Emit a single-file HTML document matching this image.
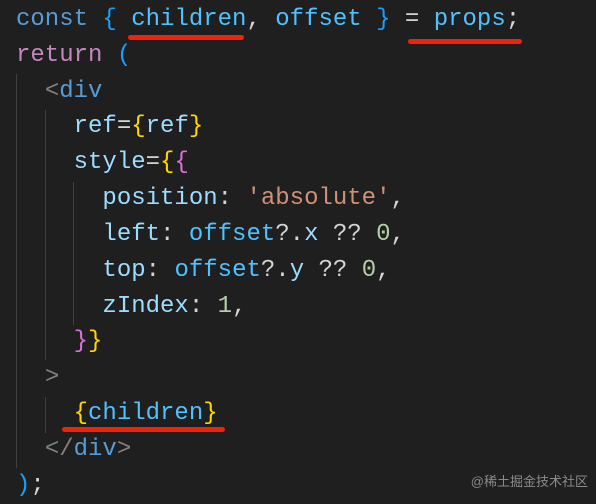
<!DOCTYPE html>
<html><head><meta charset="utf-8"><style>
body{margin:0;width:596px;height:494px;background:#1f1f1f;overflow:hidden;position:relative;font-family:"Liberation Mono",monospace;font-size:24px}
.l{position:absolute;left:16px;height:36px;line-height:36px;white-space:pre;color:#d4d4d4}
.k{color:#569cd6}.v{color:#4fc1ff}.p{color:#9cdcfe}.r{color:#c586c0}.b{color:#179fff}.y{color:#ffd700}.m{color:#da70d6}.s{color:#ce9178}.n{color:#b5cea8}.g{color:#808080}
.gd{position:absolute;width:1px;background:#404040}
.u{position:absolute;height:5px;background:#f0220a;border-radius:3px}
.w{position:absolute;right:8px;bottom:4px;font-family:"Liberation Sans","Noto Sans CJK SC",sans-serif;font-size:13px;color:#8a8a8a}
</style></head><body>
<div class="gd" style="left:16px;top:74px;height:394px"></div>
<div class="gd" style="left:45px;top:110px;height:250px"></div>
<div class="gd" style="left:73px;top:182px;height:143px"></div>
<div class="gd" style="left:45px;top:397px;height:36px"></div>
<div class="l" style="top:2px"><span class="k">const</span> <span class="b">{</span> <span class="v">children</span>, <span class="v">offset</span> <span class="b">}</span> = <span class="v">props</span>;</div>
<div class="l" style="top:38px"><span class="r">return</span> <span class="b">(</span></div>
<div class="l" style="top:74px">  <span class="g">&lt;</span><span class="k">div</span></div>
<div class="l" style="top:109px">    <span class="p">ref</span>=<span class="y">{</span><span class="p">ref</span><span class="y">}</span></div>
<div class="l" style="top:145px">    <span class="p">style</span>=<span class="y">{</span><span class="m">{</span></div>
<div class="l" style="top:181px">      <span class="p">position</span>: <span class="s">'absolute'</span>,</div>
<div class="l" style="top:217px">      <span class="p">left</span>: <span class="v">offset</span>?.<span class="p">x</span> ?? <span class="n">0</span>,</div>
<div class="l" style="top:253px">      <span class="p">top</span>: <span class="v">offset</span>?.<span class="p">y</span> ?? <span class="n">0</span>,</div>
<div class="l" style="top:289px">      <span class="p">zIndex</span>: <span class="n">1</span>,</div>
<div class="l" style="top:324px">    <span class="m">}</span><span class="y">}</span></div>
<div class="l" style="top:360px">  <span class="g">&gt;</span></div>
<div class="l" style="top:396px">    <span class="y">{</span><span class="v">children</span><span class="y">}</span></div>
<div class="l" style="top:432px">  <span class="g">&lt;/</span><span class="k">div</span><span class="g">&gt;</span></div>
<div class="l" style="top:468px"><span class="b">)</span>;</div>
<div class="u" style="left:128px;top:35px;width:116px"></div>
<div class="u" style="left:408px;top:39px;width:114px"></div>
<div class="u" style="left:62px;top:427px;width:163px"></div>
<div class="w">@稀土掘金技术社区</div>
</body></html>
